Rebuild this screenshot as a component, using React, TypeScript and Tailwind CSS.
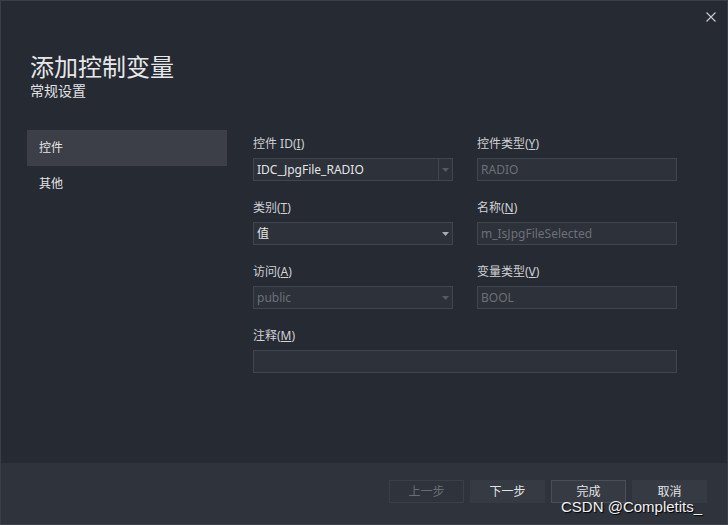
import React from "react";

const font = { fontFamily: "'Noto Sans', 'Noto Sans CJK SC', sans-serif" };

function Label({ children }: { children: React.ReactNode }) {
  return <div className="h-[28px] pt-[6px] text-[12px] leading-[16px] text-[#cfd1d4]">{children}</div>;
}

function Arrow({ dim }: { dim?: boolean }) {
  return (
    <svg width="7" height="4" viewBox="0 0 7 4" className="block">
      <path d="M0 0h7L3.5 4z" fill={dim ? "#555962" : "#a9acb1"} />
    </svg>
  );
}

function Field({
  value,
  disabled,
  combo,
  split,
  wide,
}: {
  value?: string;
  disabled?: boolean;
  combo?: boolean;
  split?: boolean;
  wide?: boolean;
}) {
  return (
    <div
      className={`flex h-[23px] items-center border border-[#41454e] bg-[#2d3139] text-[12px] ${wide ? "w-[424px]" : "w-[200px]"} ${disabled ? "text-[#6c7078]" : "text-[#e4e5e7]"}`}
    >
      <span className="flex-1 pl-[3px] leading-[21px]">{value}</span>
      {combo && (
        <span className={`flex h-full w-[14px] items-center justify-center ${split ? "border-l border-[#41454e]" : ""}`}>
          <Arrow dim={split || disabled} />
        </span>
      )}
    </div>
  );
}

function Btn({ children, kind }: { children: React.ReactNode; kind: "off" | "def" | "norm" }) {
  const cls =
    kind === "off"
      ? "border-[#3b3f48] bg-[#2f333c] text-[#6a6d74]"
      : kind === "def"
        ? "border-[#4a4e57] bg-[#363a43] text-[#e2e3e5]"
        : "border-[#363a43] bg-[#363a43] text-[#e2e3e5]";
  return (
    <button className={`flex h-[23px] w-[75px] items-center justify-center border text-[12px] ${cls}`}>
      {children}
    </button>
  );
}

export default function App() {
  return (
    <div style={font} className="relative flex h-[525px] w-[728px] flex-col border border-[#3a3e47] bg-[#262a33]">
      <button className="absolute right-[11px] top-[11px]" aria-label="close">
        <svg width="10" height="10" viewBox="0 0 10 10">
          <path d="M0.5 0.5l9 9M9.5 0.5l-9 9" stroke="#c9cbce" strokeWidth="1.1" />
        </svg>
      </button>

      <div className="flex-1">
        <div className="pl-[29px] pt-[50px]">
          <h1 className="text-[24px] leading-[31px] text-[#e6e7e9]">添加控制变量</h1>
          <p className="text-[14px] leading-[17px] text-[#e0e1e3]">常规设置</p>
        </div>

        <div className="mt-[31px] flex gap-[26px] pl-[26px]">
          <nav className="w-[200px] text-[12px] text-[#e4e5e7]">
            <div className="flex h-[36px] items-center bg-[#3c3f47] pl-[12px]">控件</div>
            <div className="flex h-[36px] items-center pl-[12px]">其他</div>
          </nav>

          <div className="flex flex-col gap-[13px]">
            <div className="flex gap-[24px]">
              <div>
                <Label>
                  控件 ID(<u>I</u>)
                </Label>
                <Field value="IDC_JpgFile_RADIO" combo split />
              </div>
              <div>
                <Label>
                  控件类型(<u>Y</u>)
                </Label>
                <Field value="RADIO" disabled />
              </div>
            </div>
            <div className="flex gap-[24px]">
              <div>
                <Label>
                  类别(<u>T</u>)
                </Label>
                <Field value="值" combo />
              </div>
              <div>
                <Label>
                  名称(<u>N</u>)
                </Label>
                <Field value="m_IsJpgFileSelected" disabled />
              </div>
            </div>
            <div className="flex gap-[24px]">
              <div>
                <Label>
                  访问(<u>A</u>)
                </Label>
                <Field value="public" combo disabled />
              </div>
              <div>
                <Label>
                  变量类型(<u>V</u>)
                </Label>
                <Field value="BOOL" disabled />
              </div>
            </div>
            <div>
              <Label>
                注释(<u>M</u>)
              </Label>
              <Field wide />
            </div>
          </div>
        </div>
      </div>

      <footer className="flex h-[61px] justify-end gap-[6px] bg-[#2f333c] pr-[20px] pt-[17px]">
        <Btn kind="off">上一步</Btn>
        <Btn kind="norm">下一步</Btn>
        <Btn kind="def">完成</Btn>
        <Btn kind="norm">取消</Btn>
      </footer>

      <div
        className="absolute left-[560px] top-[497px] text-[15px] leading-[17px] text-[#f2f2f2]"
        style={{ fontFamily: "'Liberation Sans', Arial, sans-serif", textShadow: "1px 1px 1px #000" }}
      >
        CSDN @Completits_
      </div>
    </div>
  );
}
